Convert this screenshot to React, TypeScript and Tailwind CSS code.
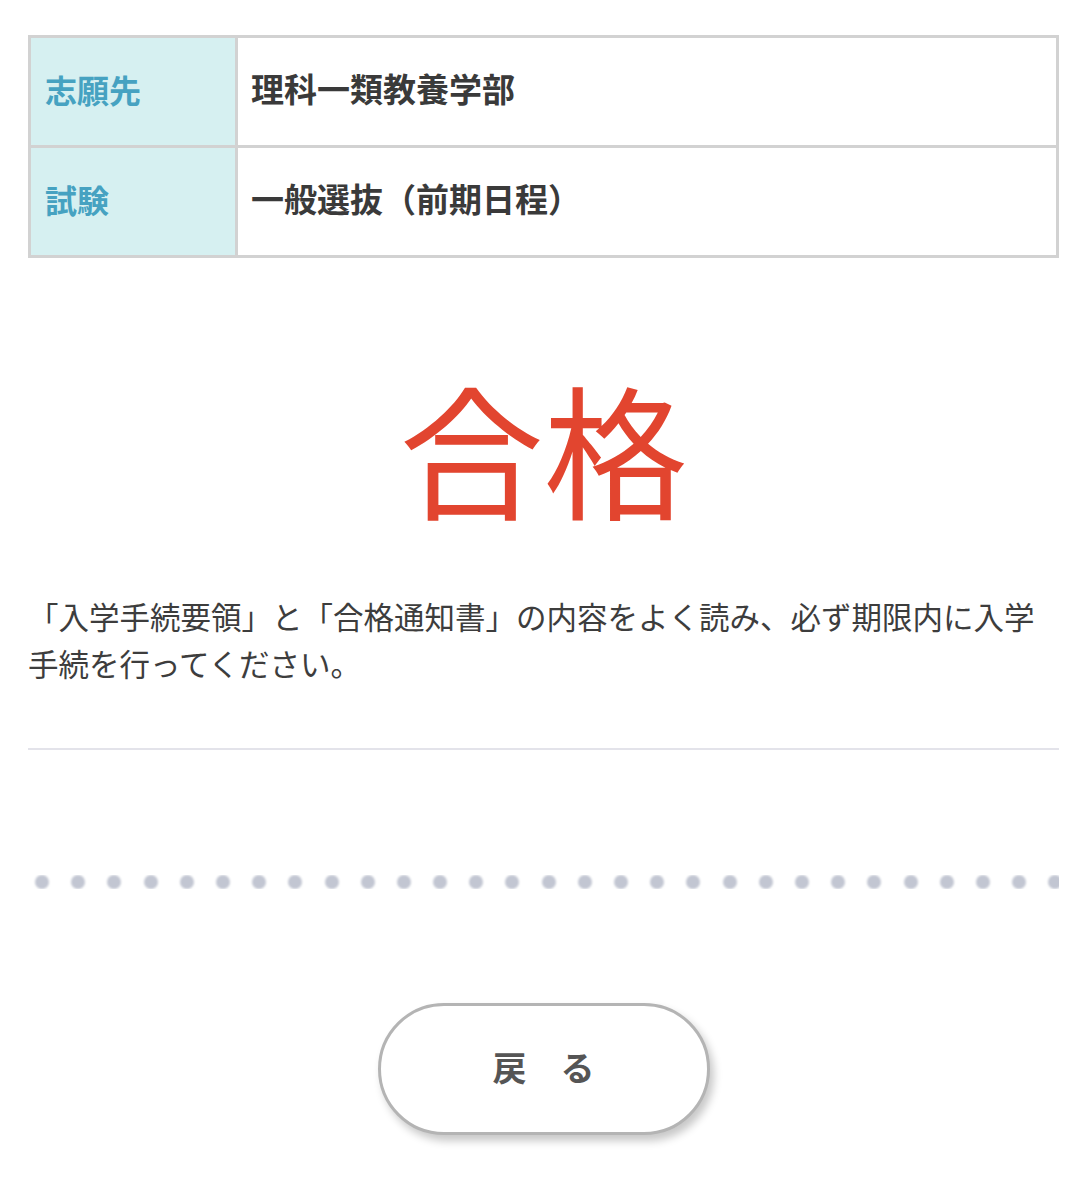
export default function App() {
  const dots = Array.from({ length: 29 })
  return (
    <div className="min-h-[1200px] bg-white font-['Noto_Sans_CJK_JP','Noto_Sans',sans-serif] text-[#333]">
      <div className="px-[28px] pt-[35px]">
        <table className="w-full border-collapse border-[3px] border-[#d2d2d2]">
          <tbody>
            <tr className="h-[110px]">
              <th className="w-[207px] border-[3px] border-[#d2d2d2] bg-[#d6f0f1] pb-[6px] pl-[14px] text-left align-middle text-[32px] font-bold text-[#46a2c1]">
                志願先
              </th>
              <td className="border-[3px] border-[#d2d2d2] pb-[6px] pl-[13px] align-middle text-[33px] font-bold text-[#3a3a3a]">
                理科一類教養学部
              </td>
            </tr>
            <tr className="h-[110px]">
              <th className="w-[207px] border-[3px] border-[#d2d2d2] bg-[#d6f0f1] pb-[6px] pl-[14px] text-left align-middle text-[32px] font-bold text-[#46a2c1]">
                試験
              </th>
              <td className="border-[3px] border-[#d2d2d2] pb-[6px] pl-[13px] align-middle text-[33px] font-bold text-[#3a3a3a]">
                一般選抜（前期日程）
              </td>
            </tr>
          </tbody>
        </table>

        <div className="mt-[116px] text-center text-[144px] leading-none text-[#e2452f]">合格</div>

        <p className="mt-[75px] text-[30.5px] leading-[47px] text-[#3d3d3d]">
          「入学手続要領」と「合格通知書」の内容をよく読み、必ず期限内に入学手続を行ってください。
        </p>

        <div className="mt-[61px] h-[2px] bg-[#e3e3ea]" />

        <div className="mt-[125px] flex h-[14px] gap-[22.2px] overflow-hidden pl-[7px]">
          {dots.map((_, i) => (
            <div key={i} className="h-[14px] w-[14px] shrink-0 rounded-full bg-[#c2c6d2] blur-[1px]" />
          ))}
        </div>

        <div className="mt-[114px] flex justify-center">
          <button className="flex h-[132px] w-[332px] items-center justify-center rounded-full border-[3px] border-[#b4b4b4] bg-white pb-[6px] text-[34px] font-bold text-[#555] shadow-[4px_6px_8px_rgba(0,0,0,0.22)]">
            戻　る
          </button>
        </div>
      </div>
    </div>
  )
}
